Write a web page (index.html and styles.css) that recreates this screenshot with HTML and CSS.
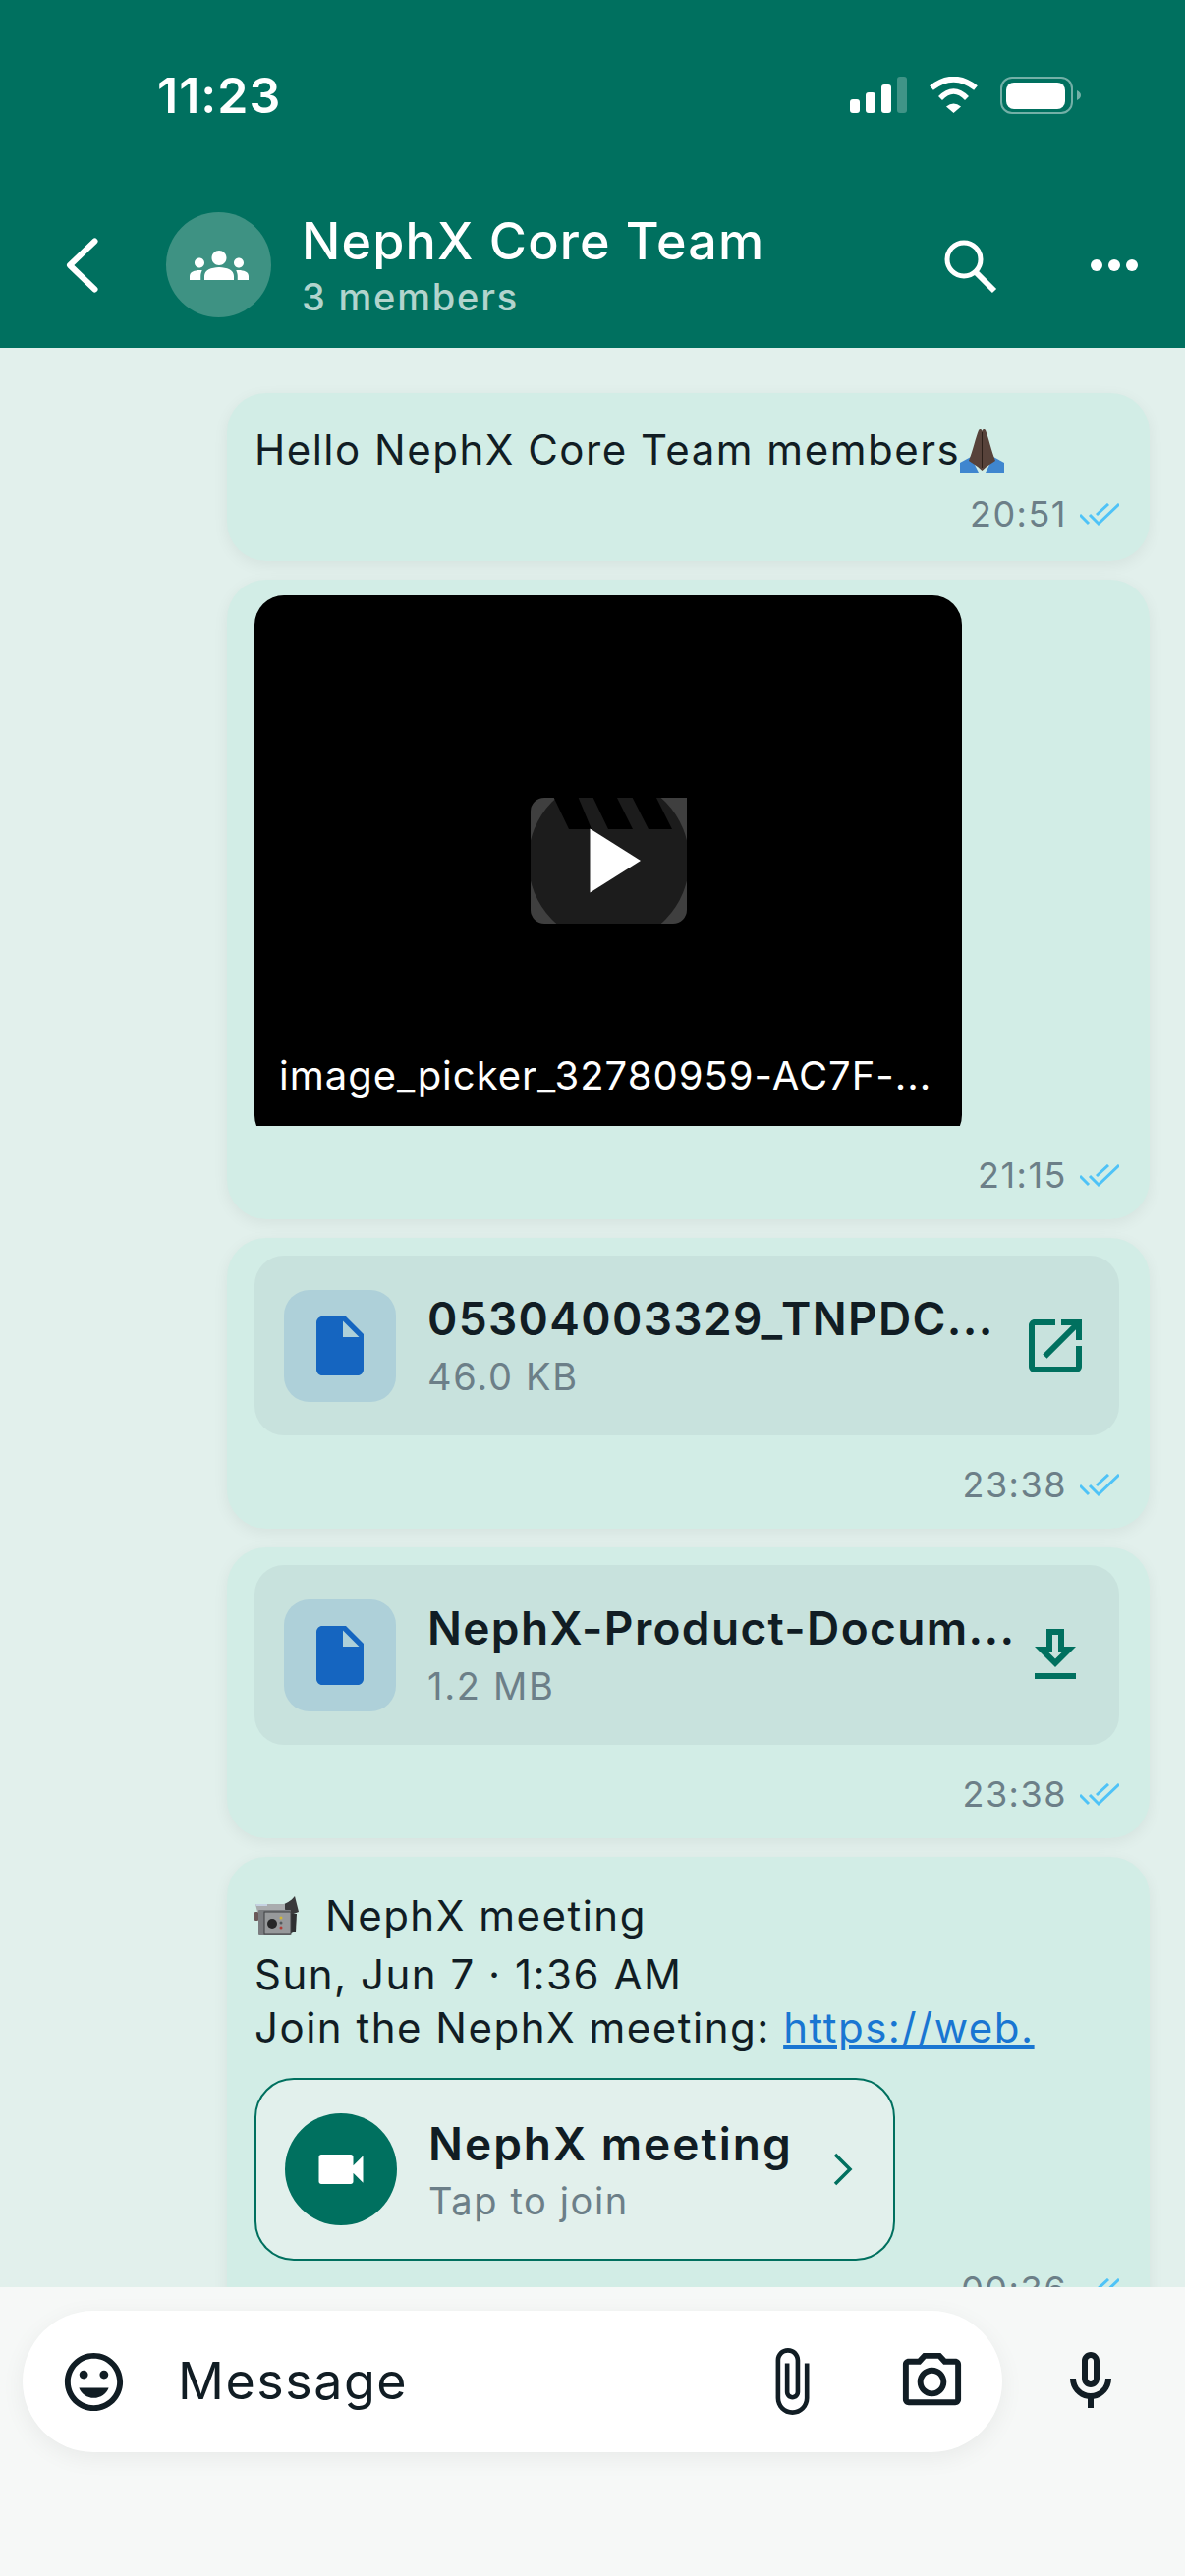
FILE: index.html
```html
<!DOCTYPE html>
<html lang="en">
<head>
<meta charset="utf-8">
<title>NephX Core Team</title>
<link rel="stylesheet" href="styles.css">
</head>
<body>
<div class="app">
  <header class="header">
    <div class="status">
      <span class="clock">11:23</span>
      <div class="status-icons">
        <svg class="signal" viewBox="0 0 58 37"><rect x="0" y="23" width="10" height="14" rx="3" fill="#fff"/><rect x="16" y="16" width="10" height="21" rx="3" fill="#fff"/><rect x="32" y="8" width="10" height="29" rx="3" fill="#fff"/><rect x="48" y="0" width="10" height="37" rx="3" fill="#fff" opacity=".25"/></svg>
        <svg class="wifi" viewBox="0 0 51 37"><path d="M3 11.5Q25.5 -6 48 11.5" fill="none" stroke="#fff" stroke-width="6"/><path d="M12 22Q25.5 8 39 22" fill="none" stroke="#fff" stroke-width="5.5"/><path d="M18 30.5Q25.5 24.5 33 30.5L25.5 37z" fill="#fff"/></svg>
        <svg class="battery" viewBox="0 0 82 38"><rect x="1" y="1" width="72" height="36" rx="11" fill="none" stroke="#fff" stroke-opacity=".45" stroke-width="2"/><rect x="6" y="6" width="60" height="27" rx="8" fill="#fff"/><path d="M78 14c2.500 1 4 3 4 5s-1.500 4-4 5z" fill="#fff" fill-opacity=".45"/></svg>
      </div>
    </div>
    <nav class="nav">
      <svg class="back" viewBox="0 0 33 56"><path d="M29.500 3.500L4 28l25.500 24.500" fill="none" stroke="#fff" stroke-width="6" stroke-linecap="round" stroke-linejoin="round"/></svg>
      <div class="avatar">
        <svg class="avatar-icon" viewBox="0 0 24 24"><path fill="#fff" d="M12 12.750c1.630 0 3.070.390 4.240.900 1.080.480 1.760 1.560 1.760 2.730V18H6v-1.610c0-1.180.680-2.260 1.760-2.730 1.170-.520 2.610-.910 4.240-.910zM4 13c1.100 0 2-.900 2-2s-.900-2-2-2-2 .900-2 2 .900 2 2 2zm1.130 1.100c-.370-.060-.740-.100-1.130-.100-.990 0-1.930.210-2.780.580C.480 14.900 0 15.620 0 16.430V18h4.500v-1.610c0-.830.230-1.610.630-2.290zM20 13c1.100 0 2-.900 2-2s-.900-2-2-2-2 .900-2 2 .900 2 2 2zm4 3.430c0-.810-.480-1.530-1.220-1.850-.850-.370-1.790-.580-2.780-.580-.390 0-.760.040-1.130.100.400.680.630 1.460.630 2.290V18H24v-1.570zM12 6c1.660 0 3 1.340 3 3s-1.340 3-3 3-3-1.340-3-3 1.340-3 3-3z"/></svg>
      </div>
      <div class="titles">
        <div class="title">NephX Core Team</div>
        <div class="subtitle">3 members</div>
      </div>
      <svg class="search" viewBox="0 0 56 56"><circle cx="21" cy="20" r="17" fill="none" stroke="#fff" stroke-width="5"/><path d="M33 33l19 19" fill="none" stroke="#fff" stroke-width="6"/></svg>
      <svg class="dots" viewBox="0 0 48 12"><circle cx="6" cy="6" r="6" fill="#fff"/><circle cx="24" cy="6" r="6" fill="#fff"/><circle cx="42" cy="6" r="6" fill="#fff"/></svg>
    </nav>
  </header>

  <main class="chat">
    <section class="bubble bubble-text">
      <p class="msg">Hello NephX Core Team members<svg class="pray" viewBox="0 0 45 44"><path d="M0 44V34l11-6 8 16z" fill="#3f86cf"/><path d="M45 44V34l-11-6-8 16z" fill="#3f86cf"/><path d="M9 32C13 22 16 8 19 1c1-1.500 3-1.500 3.500 1 .5-2.500 2.500-2.500 3.500-1 3 7 6 21 10 31l-9 6-4.500 4-4.500-4z" fill="#57423a"/><path d="M22.500 3v36" stroke="#2c1f19" stroke-width="1"/></svg></p>
      <div class="meta">
        <span class="time">20:51</span>
        <svg class="checks" viewBox="0 0 40 24"><path d="M0 12l9 9M17 12L29 1M10 12l9 9L40 1" fill="none" stroke="#4fc3f7" stroke-width="3"/></svg>
      </div>
    </section>

    <section class="bubble bubble-video">
      <div class="video-clip">
        <div class="video">
          <svg class="clapper" viewBox="0 0 159 128">
            <path d="M14 0H159V114a14 14 0 0 1-14 14H14a14 14 0 0 1-14-14V14A14 14 0 0 1 14 0z" fill="#3f3f3f"/>
            <ellipse cx="79.500" cy="64" rx="82" ry="84" fill="#1c1c1c"/>
            <rect x="-4" y="-24" width="170" height="24" fill="#000"/>
            <path d="M23.700 0H48.700L62 32H39zM63.700 0H88L104 32H79zM103.700 0H128L144 32H120z" fill="#000"/>
            <path d="M60.500 31.500L112 64 60.500 96.500z" fill="#fff"/>
          </svg>
          <span class="video-name">image_picker_32780959-AC7F-...</span>
        </div>
      </div>
      <div class="meta">
        <span class="time">21:15</span>
        <svg class="checks" viewBox="0 0 40 24"><path d="M0 12l9 9M17 12L29 1M10 12l9 9L40 1" fill="none" stroke="#4fc3f7" stroke-width="3"/></svg>
      </div>
    </section>

    <section class="bubble bubble-file">
      <div class="file">
        <div class="file-tile"><svg class="file-doc" viewBox="0 0 24 24"><path fill="#1565c0" d="M6 2c-1.100 0-1.990.900-1.990 2L4 20c0 1.100.890 2 1.990 2H18c1.100 0 2-.900 2-2V8l-6-6H6zm7 7V3.500L18.500 9H13z"/></svg></div>
        <div class="file-info">
          <div class="file-name">05304003329_TNPDC...</div>
          <div class="file-size">46.0 KB</div>
        </div>
        <svg class="file-action" viewBox="0 0 24 24"><path fill="#00705f" d="M19 19H5V5h7V3H5c-1.110 0-2 .900-2 2v14c0 1.100.890 2 2 2h14c1.100 0 2-.900 2-2v-7h-2v7zM14 3v2h3.590l-9.830 9.830 1.410 1.410L19 6.410V10h2V3h-7z"/></svg>
      </div>
      <div class="meta">
        <span class="time">23:38</span>
        <svg class="checks" viewBox="0 0 40 24"><path d="M0 12l9 9M17 12L29 1M10 12l9 9L40 1" fill="none" stroke="#4fc3f7" stroke-width="3"/></svg>
      </div>
    </section>

    <section class="bubble bubble-file">
      <div class="file">
        <div class="file-tile"><svg class="file-doc" viewBox="0 0 24 24"><path fill="#1565c0" d="M6 2c-1.100 0-1.990.900-1.990 2L4 20c0 1.100.890 2 1.990 2H18c1.100 0 2-.900 2-2V8l-6-6H6zm7 7V3.500L18.500 9H13z"/></svg></div>
        <div class="file-info">
          <div class="file-name">NephX-Product-Docum...</div>
          <div class="file-size">1.2 MB</div>
        </div>
        <svg class="file-action" viewBox="0 0 24 24"><path fill="#00705f" d="M19 9h-4V3H9v6H5l7 7 7-7zm-8 2V5h2v6h1.170L12 13.170 9.830 11H11zm-6 7h14v2H5z"/></svg>
      </div>
      <div class="meta">
        <span class="time">23:38</span>
        <svg class="checks" viewBox="0 0 40 24"><path d="M0 12l9 9M17 12L29 1M10 12l9 9L40 1" fill="none" stroke="#4fc3f7" stroke-width="3"/></svg>
      </div>
    </section>

    <section class="bubble bubble-meeting">
      <p class="msg msg-first"><svg class="movie" viewBox="0 0 45 40"><path d="M26 9C32 8 37 5 41 0l4 16-8 3z" fill="#3a3a3c"/><path d="M37 18h6l-1 18-5 2z" fill="#2f3032"/><rect x="0" y="16" width="4" height="9" rx="1" fill="#6b5a5a"/><path d="M1 8h30v8H3z" fill="#a9acae"/><path d="M1 8h12v2H2z" fill="#c5d2e2"/><rect x="4" y="14" width="33" height="26" rx="1" fill="#7b7d80"/><rect x="10" y="16" width="27" height="23" fill="#97999b" stroke="#3f4042" stroke-width="1"/><circle cx="18" cy="28" r="5" fill="#262728"/><circle cx="27" cy="22" r="1.500" fill="#d2b733"/><circle cx="27" cy="27" r="1.500" fill="#55595c"/><circle cx="27" cy="32" r="1.500" fill="#b13c35"/></svg><span class="msg-gap">NephX meeting</span></p>
      <p class="msg msg-line">Sun, Jun 7 · 1:36 AM</p>
      <p class="msg msg-line">Join the NephX meeting: <a class="link" href="#">https://web.</a></p>
      <div class="join">
        <div class="join-circle"><svg class="join-cam" viewBox="0 0 24 24"><path fill="#fff" d="M17 10.500V7c0-.550-.450-1-1-1H4c-.550 0-1 .450-1 1v10c0 .550.450 1 1 1h12c.550 0 1-.450 1-1v-3.500l4 4v-11l-4 4z"/></svg></div>
        <div class="join-info">
          <div class="join-title">NephX meeting</div>
          <div class="join-sub">Tap to join</div>
        </div>
        <svg class="join-chev" viewBox="0 0 20 34"><path d="M2 2l15 15L2 32" fill="none" stroke="#00705f" stroke-width="3.500"/></svg>
      </div>
      <div class="meta">
        <span class="time">00:36</span>
        <svg class="checks" viewBox="0 0 40 24"><path d="M0 12l9 9M17 12L29 1M10 12l9 9L40 1" fill="none" stroke="#4fc3f7" stroke-width="3"/></svg>
      </div>
    </section>
  </main>

  <footer class="footer">
    <div class="pill">
      <svg class="ic-emoji" viewBox="0 0 24 24"><path fill="#111d24" d="M11.990 2C6.470 2 2 6.480 2 12s4.470 10 9.990 10C17.520 22 22 17.520 22 12S17.520 2 11.990 2zM12 20c-4.420 0-8-3.580-8-8s3.580-8 8-8 8 3.580 8 8-3.580 8-8 8zm3.500-9c.830 0 1.500-.670 1.500-1.500S16.330 8 15.500 8 14 8.670 14 9.500s.670 1.500 1.500 1.500zm-7 0c.830 0 1.500-.670 1.500-1.500S9.330 8 8.500 8 7 8.670 7 9.500 7.670 11 8.500 11zm3.500 6.500c2.330 0 4.310-1.460 5.110-3.500H6.890c.800 2.040 2.780 3.500 5.110 3.500z"/></svg>
      <span class="placeholder">Message</span>
      <svg class="ic-clip" viewBox="0 0 24 24"><path fill="#111d24" d="M16.500 6v11.500c0 2.210-1.790 4-4 4s-4-1.790-4-4V5c0-1.380 1.120-2.500 2.500-2.500s2.500 1.120 2.500 2.500v10.500c0 .550-.450 1-1 1s-1-.450-1-1V6H10v9.500c0 1.380 1.120 2.500 2.500 2.500s2.500-1.120 2.500-2.500V5c0-2.210-1.790-4-4-4S7 2.790 7 5v12.500c0 3.040 2.460 5.500 5.500 5.500s5.500-2.460 5.500-5.500V6h-1.500z"/></svg>
      <svg class="ic-cam" viewBox="0 0 24 24"><path fill="#111d24" d="M20 4h-3.170L15 2H9L7.170 4H4c-1.100 0-2 .900-2 2v12c0 1.100.900 2 2 2h16c1.100 0 2-.900 2-2V6c0-1.100-.900-2-2-2zm0 14H4V6h4.050l1.830-2h4.240l1.830 2H20v12zM12 7c-2.760 0-5 2.240-5 5s2.240 5 5 5 5-2.240 5-5-2.240-5-5-5zm0 8c-1.650 0-3-1.350-3-3s1.350-3 3-3 3 1.350 3 3-1.350 3-3 3z"/></svg>
    </div>
    <svg class="ic-mic" viewBox="0 0 24 24"><path fill="#111d24" d="M12 14c1.660 0 3-1.340 3-3V5c0-1.660-1.340-3-3-3S9 3.340 9 5v6c0 1.660 1.340 3 3 3zm-1-9c0-.550.450-1 1-1s1 .450 1 1v6c0 .550-.450 1-1 1s-1-.450-1-1V5zm6 6c0 2.760-2.240 5-5 5s-5-2.240-5-5H5c0 3.530 2.610 6.430 6 6.920V21h2v-3.080c3.390-.490 6-3.390 6-6.920h-2z"/></svg>
  </footer>
</div>
</body>
</html>
```

FILE: styles.css
```css
* { box-sizing: border-box; }
html, body { margin: 0; padding: 0; }
body { width: 1206px; height: 2622px; overflow: hidden; font-family: Inter, "Liberation Sans", sans-serif; color: #111d24; }
p { margin: 0; }

.app { width: 1206px; height: 2622px; display: flex; flex-direction: column; background: #e2f0ec; }

.header { height: 354px; flex: none; background: #00705f; color: #fff; padding-top: 70px; display: flex; flex-direction: column; }
.status { height: 54px; display: flex; align-items: center; padding: 0 106px 0 160px; justify-content: space-between; }
.clock { font-size: 50px; font-weight: 600; line-height: 54px; letter-spacing: 1px; }
.status-icons { display: flex; align-items: center; }
.signal { width: 58px; height: 37px; margin-top: -1px; }
.wifi { width: 51px; height: 37px; margin-left: 22px; margin-top: -1px; }
.battery { width: 82px; height: 38px; margin-left: 22px; margin-top: -1px; }

.nav { margin-top: 92px; height: 107px; display: flex; align-items: center; padding-left: 67px; }
.back { width: 33px; height: 56px; flex: none; }
.avatar { width: 107px; height: 107px; border-radius: 50%; background: #3e9283; margin-left: 69px; flex: none; display: flex; align-items: center; justify-content: center; }
.avatar-icon { width: 60px; height: 60px; }
.titles { margin-left: 31px; flex: 1; margin-top: -1px; }
.title { font-size: 52px; font-weight: 500; line-height: 64px; color: #fff; letter-spacing: 1.2px; }
.subtitle { font-size: 38px; font-weight: 500; line-height: 44px; color: #b2d4cd; letter-spacing: 1.8px; margin-top: 2px; }
.search { width: 56px; height: 56px; flex: none; margin-top: 4px; }
.dots { width: 48px; height: 12px; flex: none; margin-left: 94px; margin-right: 48px; }

.chat { flex: 1; min-height: 0; overflow: hidden; padding: 46px 36px 0 231px; display: flex; flex-direction: column; gap: 19px; }
.bubble { flex: none; background: #d2ede6; border-radius: 40px; padding: 0 31px 0 28px; box-shadow: 0 4px 16px rgba(0, 0, 0, .06); }

.msg { font-size: 42px; line-height: 56px; letter-spacing: 1.5px; }
.pray { width: 45px; height: 44px; vertical-align: -8px; }

.meta { display: flex; justify-content: flex-end; align-items: center; height: 40px; }
.time { font-size: 36px; line-height: 40px; color: #6c7f88; letter-spacing: 1.5px; }
.checks { width: 40px; height: 24px; margin-left: 13px; margin-top: 2px; }

.bubble-text { height: 171px; padding-top: 30px; }
.bubble-text .meta { margin-top: 17px; }

.bubble-video { height: 651px; padding-top: 16px; }
.video-clip { width: 720px; height: 540px; overflow: hidden; }
.video { width: 720px; height: 559px; background: #000; border-radius: 30px; display: flex; flex-direction: column; align-items: center; padding-top: 206px; }
.clapper { width: 159px; height: 128px; flex: none; overflow: hidden; }
.video-name { margin-top: 132px; width: 100%; padding-left: 25px; font-size: 40px; line-height: 46px; color: #fff; letter-spacing: 1px; white-space: nowrap; }
.bubble-video .meta { margin-top: 30px; }

.bubble-file { height: 296px; padding-top: 18px; }
.file { height: 183px; border-radius: 30px; background: #c8e2dd; display: flex; align-items: center; padding: 0 29px 0 30px; }
.file-tile { width: 114px; height: 114px; border-radius: 26px; background: #aed0d9; flex: none; display: flex; align-items: center; justify-content: center; }
.file-doc { width: 72px; height: 72px; }
.file-info { margin-left: 32px; flex: 1; min-width: 0; margin-top: -1px; }
.file-name { font-size: 46px; font-weight: 600; line-height: 56px; letter-spacing: 1.35px; white-space: nowrap; color: #111d24; }
.file-size { font-size: 38px; line-height: 48px; color: #6c7f88; letter-spacing: 1.7px; margin-top: 7px; }
.file-action { width: 72px; height: 72px; flex: none; }
.bubble-file .meta { margin-top: 30px; }

.bubble-meeting { padding-top: 32px; height: 520px; }
.msg-first { display: flex; align-items: center; height: 56px; }
.movie { width: 45px; height: 40px; flex: none; }
.msg-gap { margin-left: 27px; }
.msg-line { line-height: 54px; }
.msg-first + .msg-line { margin-top: 5px; }
.link { color: #1976d2; text-decoration: underline; }
.join { margin-top: 24px; width: 652px; height: 186px; border: 2px solid #00705f; border-radius: 40px; background: #e2f0ec; display: flex; align-items: center; padding-left: 29px; }
.join-circle { width: 114px; height: 114px; border-radius: 50%; background: #00705f; flex: none; display: flex; align-items: center; justify-content: center; }
.join-cam { width: 60px; height: 60px; }
.join-info { margin-left: 32px; flex: none; width: 412px; margin-top: 1px; }
.join-title { font-size: 46px; font-weight: 600; line-height: 56px; letter-spacing: 2px; color: #111d24; }
.join-sub { font-size: 38px; line-height: 46px; color: #6c7f88; letter-spacing: 1.6px; margin-top: 7px; }
.join-chev { width: 20px; height: 34px; flex: none; }
.bubble-meeting .meta { margin-top: 9px; }

.footer { height: 294px; flex: none; background: #f6f8f7; display: flex; align-items: flex-start; padding: 24px 0 0 23px; position: relative; }
.pill { width: 997px; height: 144px; border-radius: 72px; background: #fff; box-shadow: 0 6px 24px rgba(0, 0, 0, .06); display: flex; align-items: center; padding-left: 37px; flex: none; }
.ic-emoji { width: 71px; height: 71px; flex: none; }
.placeholder { margin-left: 50px; font-size: 52px; line-height: 60px; letter-spacing: 1.5px; flex: 1; color: #111d24; }
.ic-clip { width: 74px; height: 74px; flex: none; }
.ic-cam { width: 71px; height: 71px; flex: none; margin-left: 71px; margin-right: 36px; }
.ic-mic { width: 72px; height: 72px; flex: none; margin-left: 54px; margin-top: 36px; }
```
